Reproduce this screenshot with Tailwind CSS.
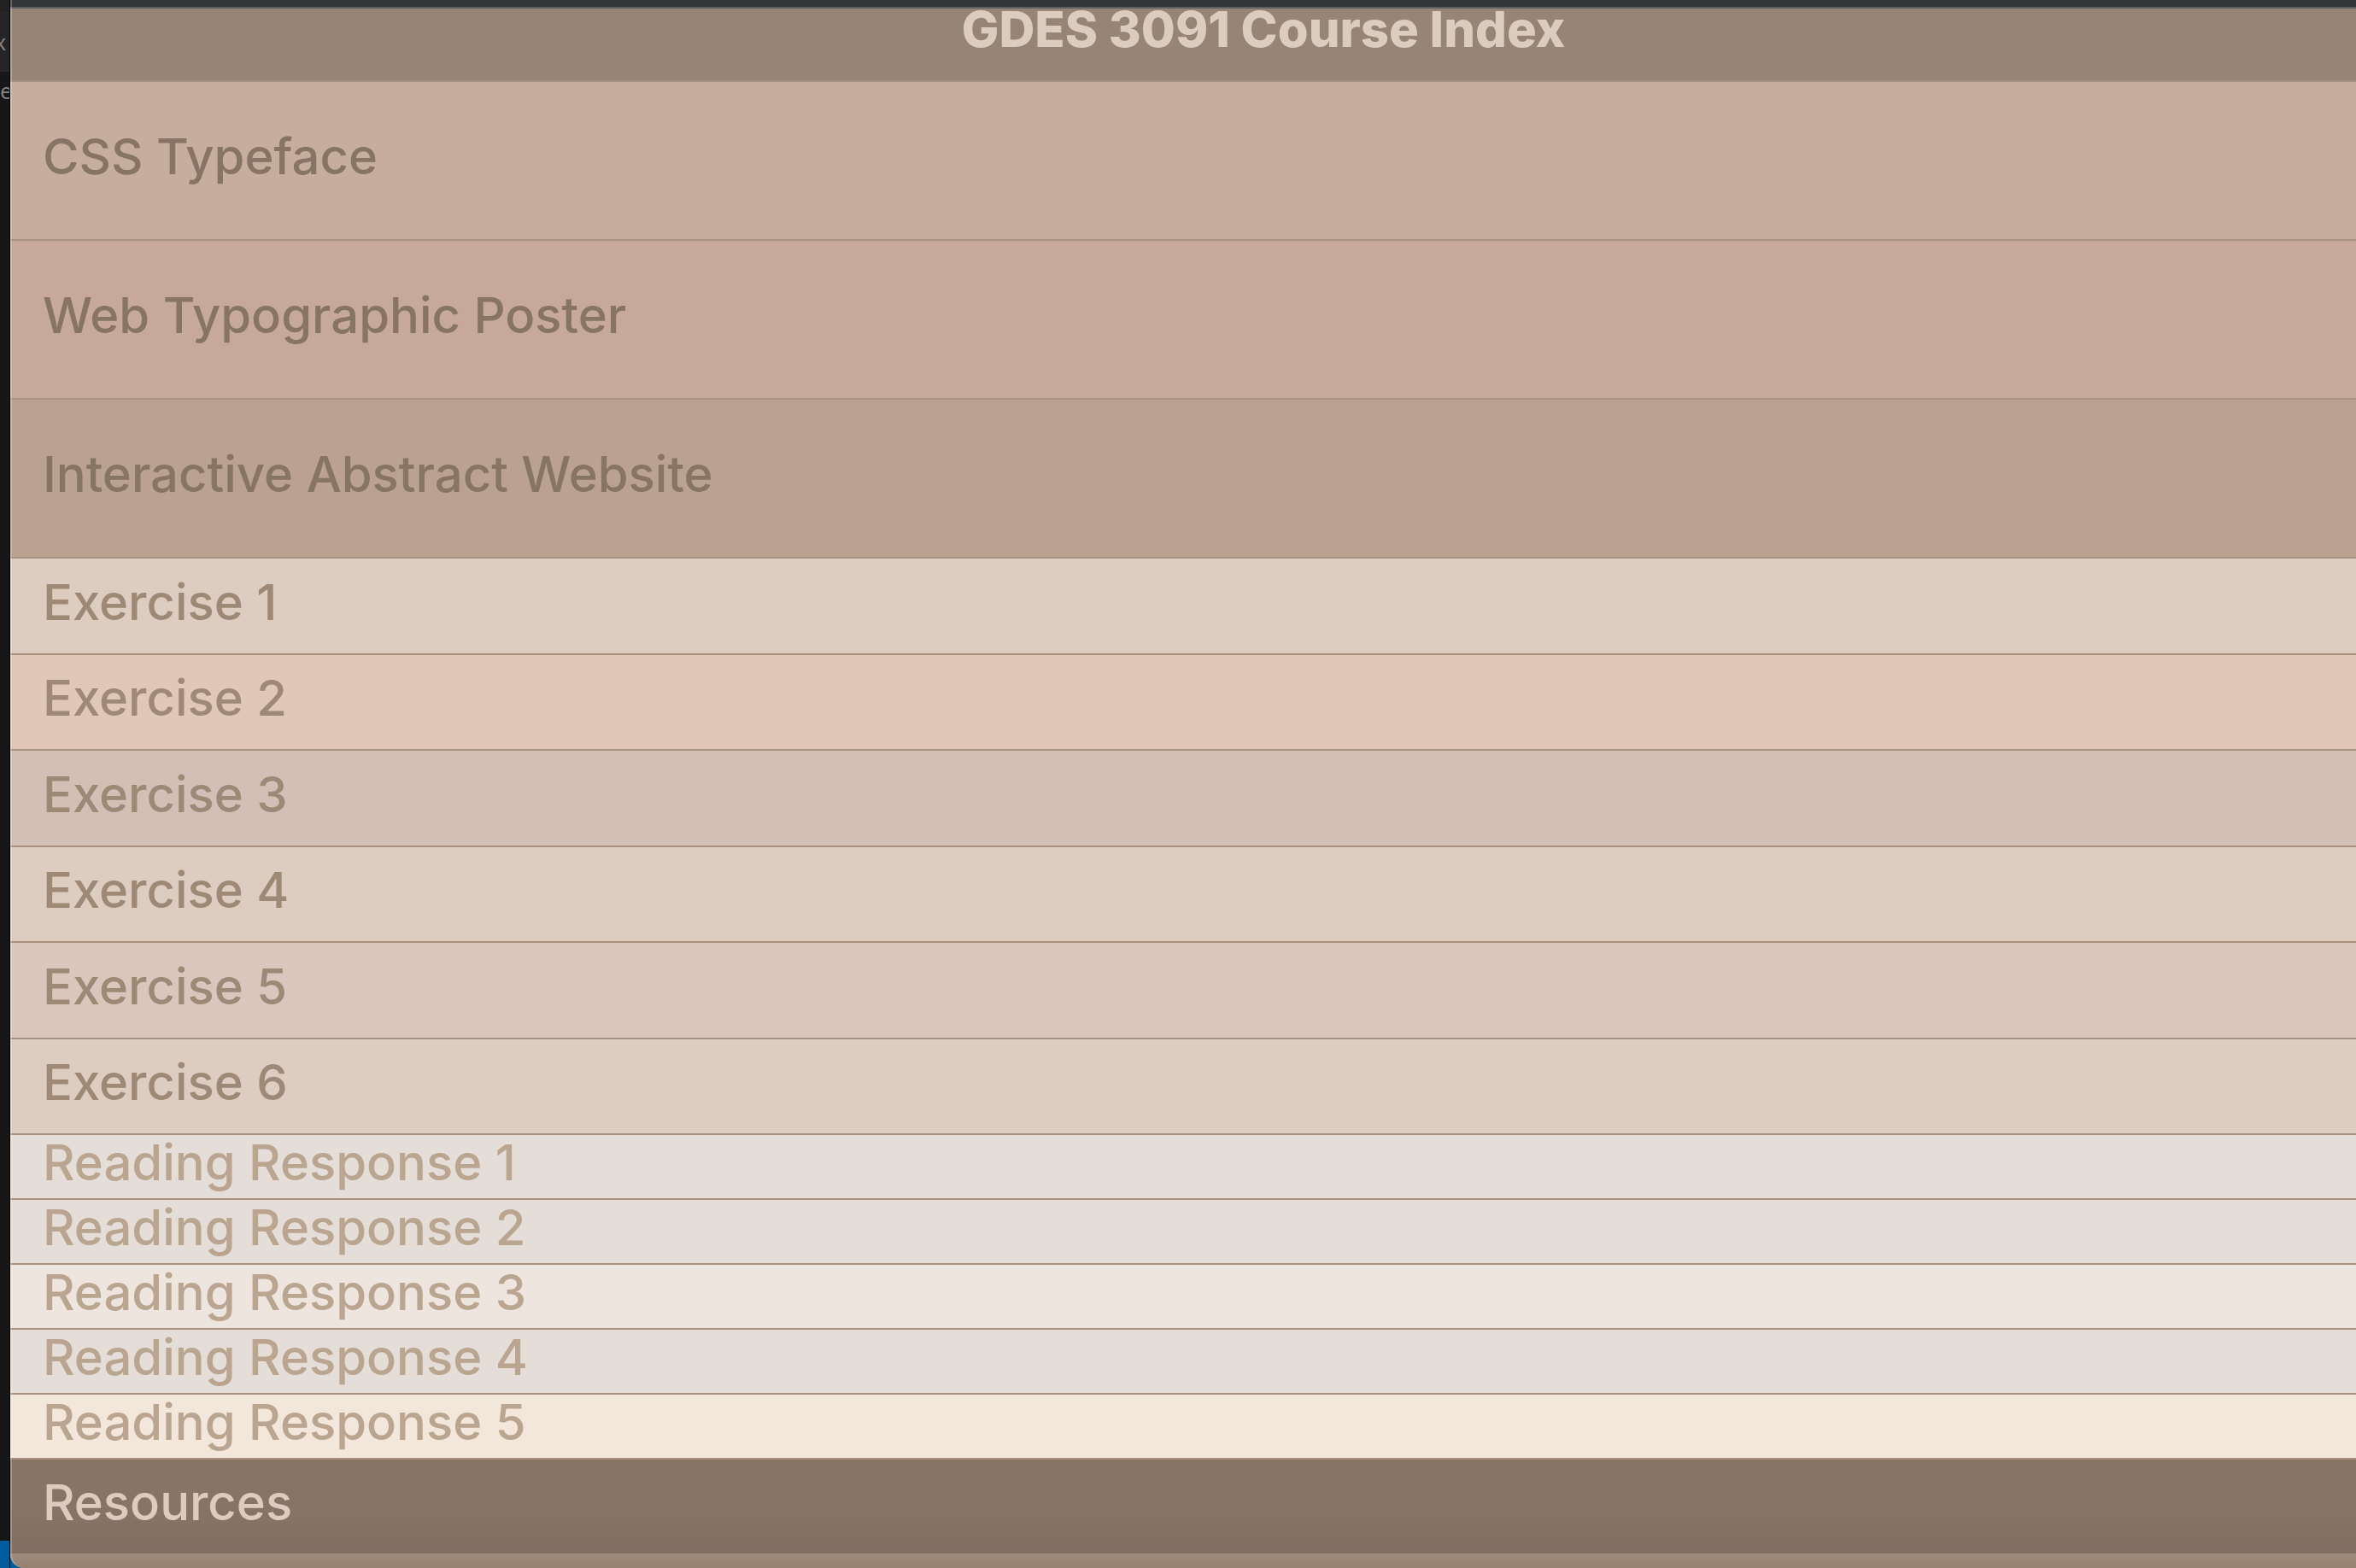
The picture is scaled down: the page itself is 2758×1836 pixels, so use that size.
<!DOCTYPE html>
<html lang="en">
<head>
<meta charset="utf-8">
<meta name="viewport" content="width=device-width, initial-scale=1">
<title>GDES 3091 Course Index</title>
<script src="https://cdn.jsdelivr.net/npm/@tailwindcss/browser@4"></script>
</head>
<body class="flex min-h-screen overflow-x-hidden bg-[#171717] font-['Inter',sans-serif] text-[58px] leading-[64px] font-medium">
  <!-- Sliver of the editor window behind the browser -->
  <aside class="flex w-3 shrink-0 flex-col overflow-hidden border-r border-black bg-[#171717] font-['Open_Sans',sans-serif] text-[26px] leading-8 text-[#858585]" aria-hidden="true">
    <div class="h-[14px] bg-[#222222]"></div>
    <div class="flex h-[70px] items-center justify-end bg-[#252525] pr-1">x</div>
    <div class="flex h-[44px] items-center">e</div>
    <div class="mt-auto h-8 bg-[#005c9e]"></div>
  </aside>

  <!-- Browser window -->
  <div class="relative flex min-w-0 grow flex-col bg-[#005c9e]">
    <div class="flex grow flex-col overflow-hidden rounded-bl-2xl bg-[#9b8676]">
      <div class="h-[10px] border-b-2 border-[#5b5e63] bg-[#35363a]"></div>
      <header class="border-b-2 border-[#a48f80] bg-[#968474] pb-7 pl-[188px] text-center text-[#dccbbf]">
        <h1 class="-mt-2 font-extrabold">GDES 3091 Course Index</h1>
      </header>
      <main>
        <nav aria-label="Projects" class="text-[#877465] *:flex *:h-[186px] *:items-center *:border-b-2 *:border-[#a8917f] *:pb-[10px] *:pl-[38px]">
          <a href="#" class="bg-[#c6ad9d]">CSS Typeface</a>
          <a href="#" class="bg-[#c7a999]">Web Typographic Poster</a>
          <a href="#" class="bg-[#baa190]">Interactive Abstract Website</a>
        </nav>
        <nav aria-label="Exercises" class="text-[#9e8976] *:flex *:items-center *:border-b-2 *:border-[#a8917f] *:pb-[10px] *:pl-[38px] *:odd:h-[113px] *:even:h-[112px]">
          <a href="#" class="bg-[#ddcdc0]">Exercise 1</a>
          <a href="#" class="bg-[#e1c7b8]">Exercise 2</a>
          <a href="#" class="bg-[#d2c0b7]">Exercise 3</a>
          <a href="#" class="bg-[#ddcdc0]">Exercise 4</a>
          <a href="#" class="bg-[#d9c7bd]">Exercise 5</a>
          <a href="#" class="bg-[#ddcdc0]">Exercise 6</a>
        </nav>
        <nav aria-label="Reading responses" class="text-[#baa590] *:flex *:h-[76px] *:items-center *:border-b-2 *:border-[#a8917f] *:pb-[10px] *:pl-[38px]">
          <a href="#" class="bg-[#e5ddd7]">Reading Response 1</a>
          <a href="#" class="bg-[#e5ddd7]">Reading Response 2</a>
          <a href="#" class="bg-[#eee5df]">Reading Response 3</a>
          <a href="#" class="bg-[#e5ddd7]">Reading Response 4</a>
          <a href="#" class="bg-[#f3e7db]">Reading Response 5</a>
        </nav>
      </main>
      <a href="#" class="flex h-[110px] items-center bg-linear-to-b from-[#877465] from-50% to-[#806e62] pb-[10px] pl-[38px] text-[#dccbbf]">Resources</a>
      <div class="min-h-4 grow bg-linear-to-b from-[#9e8b7b] to-[#978070]"></div>
    </div>
    <div class="pointer-events-none absolute inset-0 rounded-bl-2xl border-l-2 border-white/25"></div>
  </div>
</body>
</html>
